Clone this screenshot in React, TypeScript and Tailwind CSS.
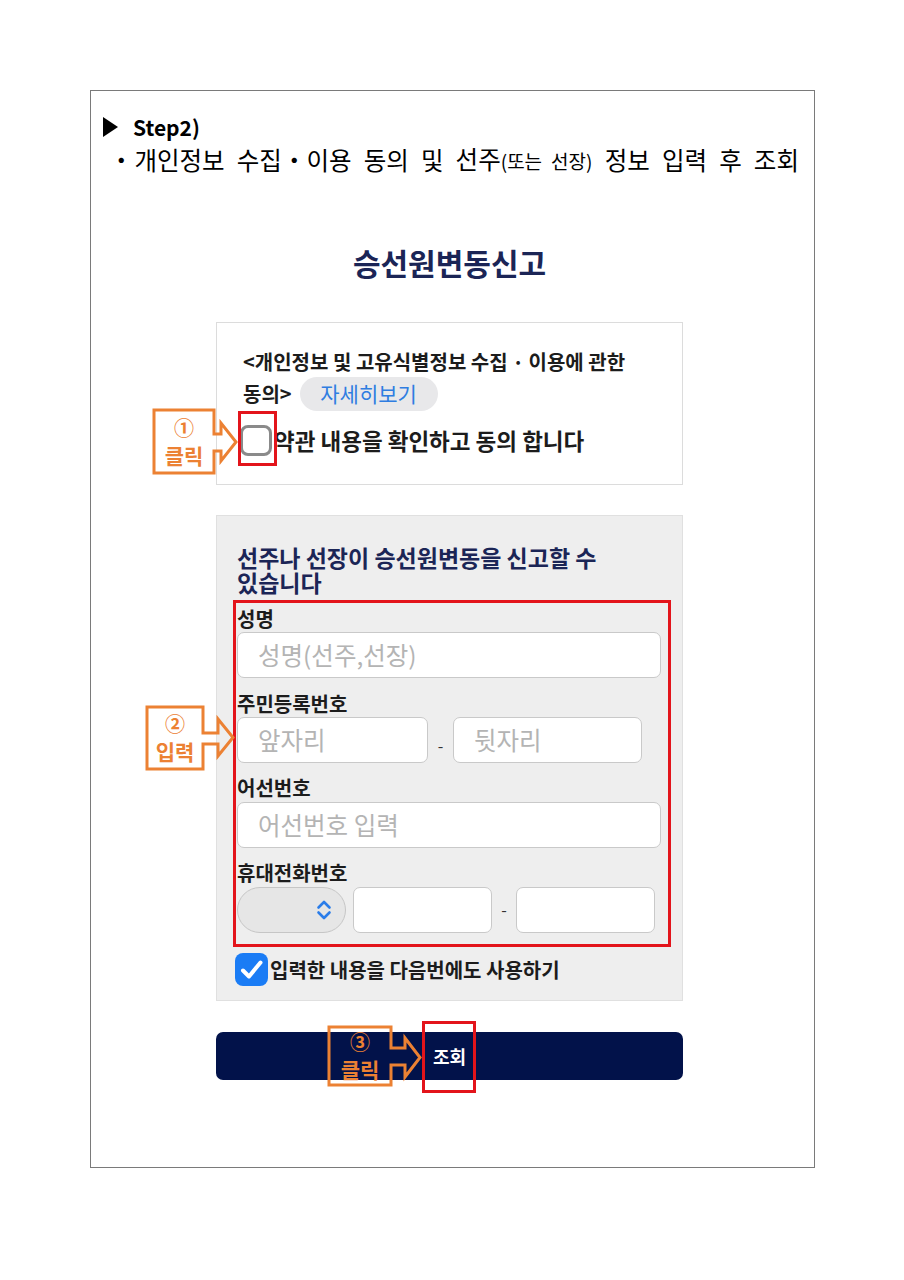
import React from "react";

type CalloutProps = {
  w: number;
  h: number;
  bw: number;
  bh: number;
  sTop: number;
  sBot: number;
  hTop: number;
  hBot: number;
  base: number;
  tip: number;
  num: string;
  text: string;
  className: string;
};

function Callout({ w, h, bw, bh, sTop, sBot, hTop, hBot, base, tip, num, text, className }: CalloutProps) {
  const tipY = (hTop + hBot) / 2;
  const d = `M2 2 H${bw} V${sTop} H${base} V${hTop} L${tip} ${tipY} L${base} ${hBot} V${sBot} H${bw} V${bh} H2 Z`;
  return (
    <div className={className} style={{ width: w, height: h }}>
      <svg width={w} height={h} viewBox={`0 0 ${w} ${h}`} className="absolute left-0 top-0">
        <path d={d} fill="none" stroke="#EC8133" strokeWidth="3" strokeLinejoin="miter" />
      </svg>
      <div
        className="absolute top-0 left-0 flex flex-col items-center justify-center text-[#EC8133] font-bold"
        style={{ width: bw + 2, height: bh + 2 }}
      >
        <span className="text-[20px] leading-[26px]">{num}</span>
        <span className="text-[21px] leading-[28px]">{text}</span>
      </div>
    </div>
  );
}

function Input({ placeholder, className }: { placeholder?: string; className: string }) {
  return (
    <div
      className={`h-[46px] bg-white border border-[#c9c9c9] rounded-[7px] flex items-center pl-[20px] text-[24.5px] text-[#b4b4b4] ${className}`}
    >
      {placeholder}
    </div>
  );
}

function Label({ children, className }: { children: React.ReactNode; className: string }) {
  return (
    <div className={`h-[24px] leading-[24px] text-[20px] font-bold text-[#1c1c1c] ${className}`}>{children}</div>
  );
}

export default function App() {
  return (
    <div className="w-[904px] h-[1280px] bg-white pt-[90px] pl-[90px] font-['Noto_Sans_CJK_KR','Noto_Sans',sans-serif] text-[#111]">
      <div className="w-[725px] h-[1078px] border border-[#7a7a7a]">
        {/* Step row */}
        <div className="mt-[24px] h-[24px] flex items-center pl-[12px]">
          <svg width="15" height="20" viewBox="0 0 15 20">
            <polygon points="0,0 15,10 0,20" fill="#000" />
          </svg>
          <span className="ml-[15px] text-[21px] font-bold leading-[24px] text-black">Step2)</span>
        </div>
        {/* bullet row */}
        <div className="mt-[6px] h-[30px] w-[690px] flex items-center justify-between ml-[18px] text-[24.5px] leading-[30px] text-black">
          <span>
            ・<span className="ml-[1px]">개인정보</span>
          </span>
          <span>수집・이용</span>
          <span>동의</span>
          <span>및</span>
          <span>
            선주
            <span className="text-[19px]">
              (또는<span className="ml-[9px]">선장)</span>
            </span>
          </span>
          <span>정보</span>
          <span>입력</span>
          <span>후</span>
          <span>조회</span>
        </div>

        {/* main column */}
        <div className="ml-[125px] w-[467px]">
          <div className="mt-[69px] h-[36px] leading-[36px] text-center text-[30px] font-bold text-[#1b2556]">
            승선원변동신고
          </div>

          {/* card 1 */}
          <div className="relative mt-[42px] h-[163px] bg-white border border-[#dcdcdc] pl-[26px] pt-[25px]">
            <div className="text-[20px] leading-[27px] font-bold text-[#1c1c1c] whitespace-nowrap">
              &lt;개인정보 및 고유식별정보 수집 · 이용에 관한
            </div>
            <div className="mt-[2px] h-[34px] flex items-center">
              <span className="text-[20px] font-bold text-[#1c1c1c]">동의&gt;</span>
              <div className="ml-[8px] w-[138px] h-[34px] rounded-full bg-[#e8e8ea] flex items-center justify-center text-[21px] text-[#2f7de1]">
                자세히보기
              </div>
            </div>
            <div className="mt-[14px] h-[31px] flex items-center">
              <div className="-ml-[3px] w-[32px] h-[31px] rounded-[8px] border-[3px] border-[#8a8a8a] bg-white" />
              <span className="ml-[2px] text-[22.5px] font-bold text-[#1c1c1c]">약관 내용을 확인하고 동의 합니다</span>
            </div>
            <div className="absolute left-[21px] top-[88px] w-[39px] h-[55px] border-[3px] border-[#e3141b]" />
            <Callout
              className="absolute left-[-65px] top-[85px]"
              w={88}
              h={68}
              bw={62}
              bh={65}
              sTop={26}
              sBot={43}
              hTop={15}
              hBot={53}
              base={69}
              tip={84}
              num="①"
              text="클릭"
            />
          </div>

          {/* card 2 */}
          <div className="relative mt-[30px] h-[486px] bg-[#eeeeee] border border-[#e0e0e0] px-[20px] pt-[29px]">
            <div className="text-[23px] leading-[25px] font-bold text-[#1b2556] w-[424px] break-keep">
              선주나 선장이 승선원변동을 신고할 수 있습니다
            </div>
            <Label className="mt-[12px]">성명</Label>
            <Input className="mt-[1px] w-[424px]" placeholder="성명(선주,선장)" />
            <Label className="mt-[14px]">주민등록번호</Label>
            <div className="mt-[1px] flex items-center">
              <Input className="w-[191px]" placeholder="앞자리" />
              <div className="w-[25px] text-center text-[16px] text-[#333] pt-[10px]">-</div>
              <Input className="w-[189px]" placeholder="뒷자리" />
            </div>
            <Label className="mt-[13px]">어선번호</Label>
            <Input className="mt-[2px] w-[424px]" placeholder="어선번호 입력" />
            <Label className="mt-[13px]">휴대전화번호</Label>
            <div className="mt-[2px] flex items-center">
              <div className="w-[109px] h-[46px] rounded-full bg-[#e6e6e6] border border-[#c6c6c6] flex items-center justify-end pr-[13px]">
                <svg width="16" height="22" viewBox="0 0 16 22">
                  <path d="M2.5 8.5 L8 3 L13.5 8.5" fill="none" stroke="#2b7de9" strokeWidth="2.6" strokeLinecap="round" strokeLinejoin="round" />
                  <path d="M2.5 13.5 L8 19 L13.5 13.5" fill="none" stroke="#2b7de9" strokeWidth="2.6" strokeLinecap="round" strokeLinejoin="round" />
                </svg>
              </div>
              <Input className="ml-[7px] w-[139px]" />
              <div className="w-[24px] text-center text-[16px] text-[#333] pb-[2px]">-</div>
              <Input className="w-[139px]" />
            </div>
            <div className="mt-[20px] h-[33px] flex items-center">
              <div className="-ml-[2px] w-[33px] h-[33px] rounded-[8px] bg-[#1a7cf5] flex items-center justify-center">
                <svg width="33" height="33" viewBox="0 0 33 33">
                  <path d="M8 17.5 L14 23.5 L25.5 9.5" fill="none" stroke="#fff" strokeWidth="4" strokeLinecap="round" strokeLinejoin="round" />
                </svg>
              </div>
              <span className="ml-[2px] text-[20px] font-bold text-[#1c1c1c]">입력한 내용을 다음번에도 사용하기</span>
            </div>
            <div className="absolute left-[16px] top-[84px] w-[438px] h-[347px] border-[3px] border-[#e3141b]" />
            <Callout
              className="absolute left-[-72px] top-[189px]"
              w={92}
              h={68}
              bw={58}
              bh={64}
              sTop={28}
              sBot={39}
              hTop={14}
              hBot={51}
              base={73}
              tip={88}
              num="②"
              text="입력"
            />
          </div>

          {/* button */}
          <div className="relative mt-[31px] h-[48px] rounded-[7px] bg-[#02124a] flex items-center justify-center text-white text-[18px] font-bold">
            조회
            <div className="absolute left-[206px] top-[-11px] w-[54px] h-[72px] border-[3px] border-[#e3141b]" />
            <Callout
              className="absolute left-[111px] top-[-7px]"
              w={96}
              h={63}
              bw={64}
              bh={60}
              sTop={23}
              sBot={40}
              hTop={13}
              hBot={52}
              base={78}
              tip={93}
              num="③"
              text="클릭"
            />
          </div>
        </div>
      </div>
    </div>
  );
}
